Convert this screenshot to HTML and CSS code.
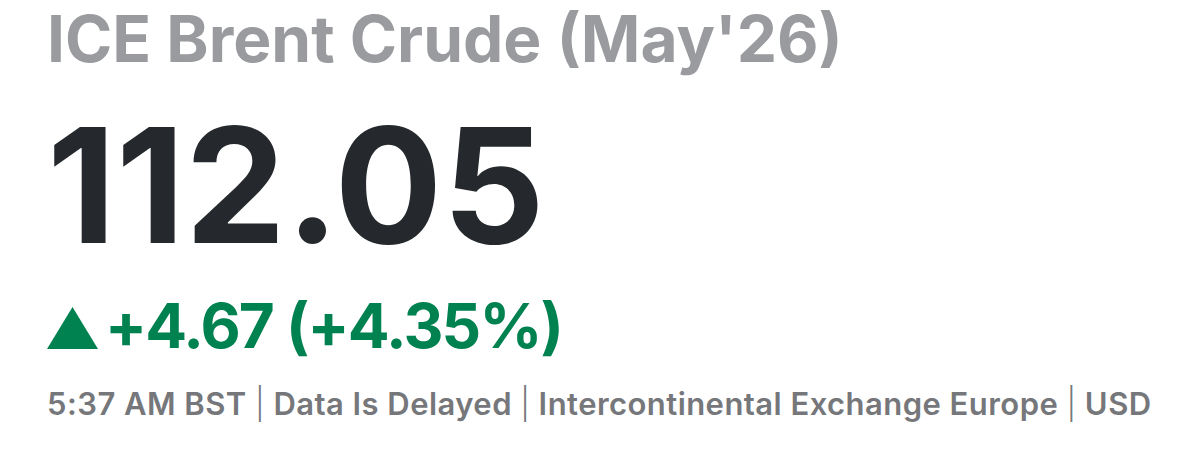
FILE: index.html
```html
<!DOCTYPE html>
<html>
<head>
<meta charset="utf-8">
<link rel="stylesheet" href="styles.css">
</head>
<body>
<main class="quote">
  <h1 class="quote-name">ICE Brent Crude (May'26)</h1>
  <div class="quote-price">112.05</div>
  <div class="quote-change">
    <svg class="arrow-up" width="51" height="42" viewBox="0 0 51 42" aria-hidden="true"><polygon points="25.5,0 51,42 0,42" fill="#008150"/></svg>
    <span class="change-text">+4.67 (+4.35%)</span>
  </div>
  <div class="quote-meta">5:37 AM BST <span class="sep">|</span> Data Is Delayed <span class="sep">|</span> Intercontinental Exchange Europe <span class="sep">|</span> USD</div>
</main>
</body>
</html>
```
FILE: styles.css
```css
html, body {
  margin: 0;
  padding: 0;
  background: #ffffff;
}
.quote {
  padding: 0 0 0 47px;
  font-family: "Inter", "Liberation Sans", sans-serif;
}
.quote-name {
  margin: 0;
  font-size: 64px;
  line-height: 78px;
  font-weight: 700;
  color: #9a9b9f;
}
.quote-price {
  margin-top: 17px;
  font-size: 160px;
  line-height: 180px;
  font-weight: 700;
  color: #25292d;
}
.quote-change {
  margin-top: 16px;
  display: flex;
  align-items: flex-end;
  gap: 7px;
  height: 70px;
  color: #008150;
}
.arrow-up {
  display: block;
  margin-bottom: 12px;
}
.change-text {
  font-size: 62px;
  line-height: 70px;
  font-weight: 700;
  letter-spacing: -1.8px;
}
.quote-meta {
  margin-top: 25px;
  font-size: 31px;
  line-height: 36px;
  font-weight: 600;
  letter-spacing: 0.45px;
  color: #76777b;
}
.sep {
  font-weight: 300;
}
```
